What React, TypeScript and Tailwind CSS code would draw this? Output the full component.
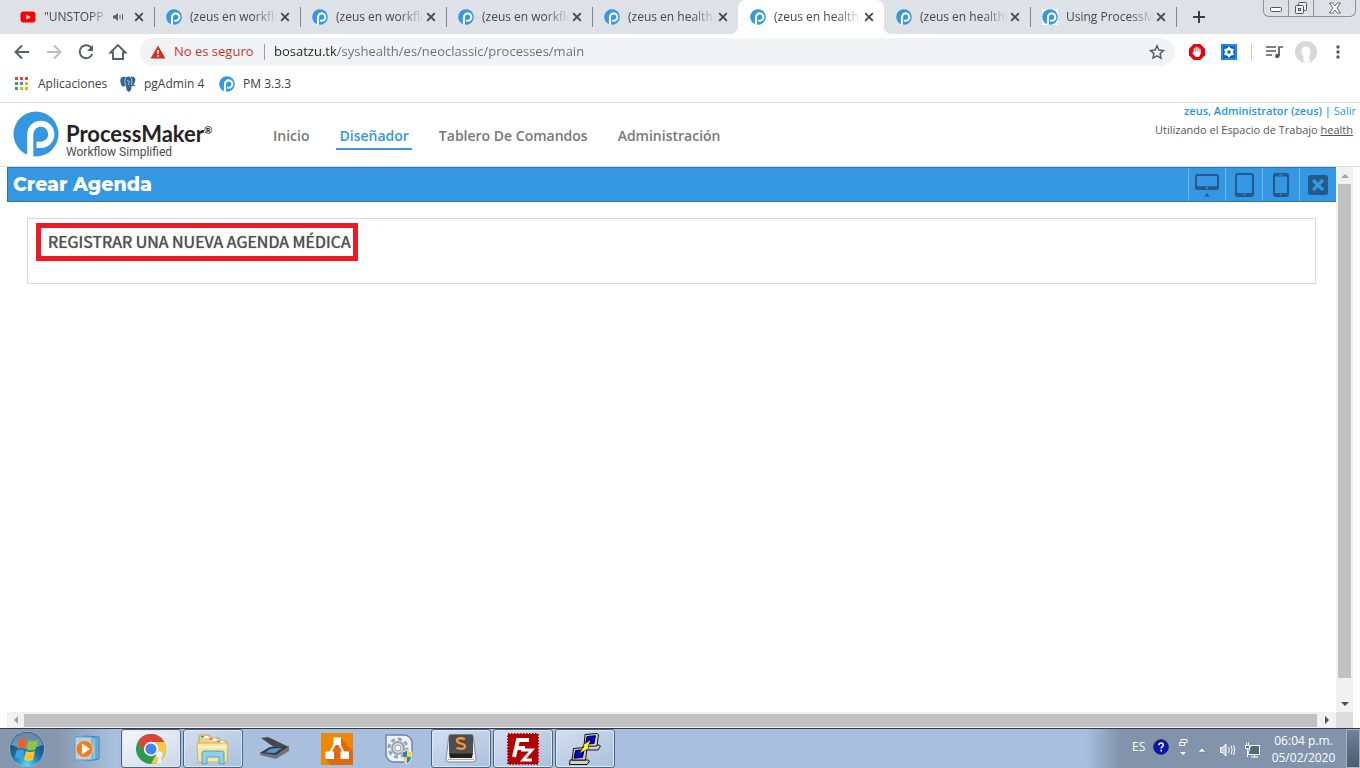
import React from "react";
import clsx from "clsx";

const TABS = [
  { title: "(zeus en workflo", active: false },
  { title: "(zeus en workflo", active: false },
  { title: "(zeus en workflo", active: false },
  { title: "(zeus en health)", active: false },
  { title: "(zeus en health)", active: true },
  { title: "(zeus en health)", active: false },
  { title: "Using ProcessM", active: false }
];

const NAV = ["Inicio", "Diseñador", "Tablero De Comandos", "Administración"];

function ProcessMakerMark({ className }: { className?: string }) {
  return (
    <svg viewBox="0 0 48 48" className={clsx("shrink-0", className)} aria-hidden="true">
      <circle cx="24" cy="24" r="23.5" fill="#3397e1" />
      <path d="M18 47V24a11 11 0 1 1 11 11.3H24.5" fill="none" stroke="#fff" strokeWidth="6.4" />
    </svg>
  );
}

function CloseGlyph() {
  return (
    <svg viewBox="0 0 10 10" className="size-[10px]" fill="none" stroke="#45494d" strokeWidth="1.9" aria-hidden="true">
      <path d="M1.2 1.2l7.6 7.6M8.8 1.2L1.2 8.8" />
    </svg>
  );
}

function YoutubeIcon() {
  return (
    <svg viewBox="0 0 16 12" className="h-3 w-4 shrink-0" aria-hidden="true">
      <rect x="0.5" y="0.5" width="15" height="11" rx="3" fill="#f00" />
      <path d="M6.4 3.6v4.8L10.6 6z" fill="#fff" />
    </svg>
  );
}

function TabStrip() {
  return (
    <div className="flex h-[34px] shrink-0 bg-[#dee1e6]">
      <div className="flex min-w-0 items-center pl-2">
        <div className="flex h-full w-[146px] items-center pr-[10px] pl-3">
          <YoutubeIcon />
          <span className="ml-2 w-[65px] whitespace-nowrap [mask-image:linear-gradient(to_right,#000_70%,transparent)]">
            "UNSTOPP
          </span>
          <svg viewBox="0 0 12 10" className="ml-[3px] h-[10px] w-3 shrink-0" aria-label="audio">
            <path d="M1 3.5h2L6 1v8L3 6.5H1z" fill="#5f6368" />
            <path d="M8 3v4M10.5 2v6" stroke="#5f6368" fill="none" />
          </svg>
          <button type="button" aria-label="Cerrar" className="ml-auto"><CloseGlyph /></button>
        </div>
        {TABS.map((tab, index) => (
          <div
            key={index}
            className={clsx(
              "relative flex h-full w-[146px] items-center pr-[10px] pl-3",
              tab.active && "rounded-t-lg bg-white"
            )}
          >
            {tab.active || TABS[index - 1]?.active ? null : (
              <span className="absolute top-[7px] left-0 h-5 w-px bg-[#83868b]" />
            )}
            {tab.active ? (
              <>
                <span className="absolute bottom-0 -left-2 size-2 bg-[radial-gradient(circle_at_0_0,#dee1e6_8px,#fff_8px)]" />
                <span className="absolute -right-2 bottom-0 size-2 bg-[radial-gradient(circle_at_100%_0,#dee1e6_8px,#fff_8px)]" />
              </>
            ) : null}
            <ProcessMakerMark className={clsx("size-4", index === 6 && "bg-white")} />
            <span className="ml-2 w-[88px] whitespace-nowrap [mask-image:linear-gradient(to_right,#000_72%,transparent)]">
              {tab.title}
            </span>
            <button type="button" aria-label="Cerrar" className="ml-auto"><CloseGlyph /></button>
          </div>
        ))}
        <span className="h-5 w-px bg-[#83868b]" />
        <button type="button" aria-label="Nueva pestaña" className="ml-4">
          <svg viewBox="0 0 12 12" className="size-3" stroke="#3c4043" strokeWidth="2" aria-hidden="true">
            <path d="M6 0v12M0 6h12" />
          </svg>
        </button>
      </div>

      <div className="mr-1 ml-auto flex h-[17px] divide-x divide-[#8f9297] rounded-b-md border border-t-0 border-[#8f9297]">
        <button type="button" aria-label="Minimizar" className="flex w-[25px] items-center justify-center">
          <svg viewBox="0 0 12 6" className="mt-1 h-[6px] w-3" fill="#fff" stroke="#53565a">
            <rect x="0.5" y="0.5" width="11" height="4" rx="1" />
          </svg>
        </button>
        <button type="button" aria-label="Restaurar" className="flex w-[25px] items-center justify-center">
          <svg viewBox="0 0 14 14" className="size-[14px]" fill="#eceef0" stroke="#53565a">
            <rect x="4.5" y="1.5" width="8" height="8" rx="1" />
            <rect x="1.5" y="4.5" width="8" height="8" rx="1" />
            <rect x="4.5" y="7.5" width="2" height="2" />
          </svg>
        </button>
        <button type="button" aria-label="Cerrar ventana" className="flex w-[41px] items-center justify-center">
          <svg viewBox="0 0 12 12" className="size-3" fill="#fff" stroke="#65686c">
            <path d="M.5 1h3L6 4l2.5-3h3L8 6l3.5 5h-3L6 8l-2.5 3h-3L4 6z" />
          </svg>
        </button>
      </div>
    </div>
  );
}

function Toolbar() {
  return (
    <div className="flex h-9 shrink-0 items-center bg-white pl-[10px]">
      <div className="flex items-center gap-2 text-[#5a5d61]">
        <button type="button" aria-label="Atrás">
          <svg viewBox="0 0 24 24" className="size-6" fill="none" stroke="currentColor" strokeWidth="2">
            <path d="M19 12H6M12 5.5L5.5 12l6.5 6.5" />
          </svg>
        </button>
        <button type="button" aria-label="Adelante" className="text-[#bcbec1]">
          <svg viewBox="0 0 24 24" className="size-6" fill="none" stroke="currentColor" strokeWidth="2">
            <path d="M5 12h13M12 5.5l6.5 6.5-6.5 6.5" />
          </svg>
        </button>
        <button type="button" aria-label="Recargar">
          <svg viewBox="0 0 24 24" className="size-6" fill="none" stroke="currentColor" strokeWidth="2">
            <path d="M17.6 8A6.5 6.5 0 1 0 18.3 14" />
            <path d="M19 5v6h-6z" fill="currentColor" stroke="none" />
          </svg>
        </button>
        <button type="button" aria-label="Inicio">
          <svg viewBox="0 0 24 24" className="size-6" fill="none" stroke="currentColor" strokeWidth="1.9">
            <path d="M4.5 12.5L12 5l7.5 7.5H17V19H7v-6.5z" />
          </svg>
        </button>
      </div>
      <div className="ml-[10px] flex h-7 min-w-0 flex-1 items-center rounded-full bg-[#f1f3f4] pr-2 pl-[10px] text-[13px]">
        <svg viewBox="0 0 16 14" className="h-[14px] w-4 shrink-0" aria-hidden="true">
          <path d="M8 .5L15.5 13.5H.5z" fill="#cb3225" />
          <path d="M8 5v4M8 10.2v1.6" stroke="#fff" strokeWidth="1.5" />
        </svg>
        <span className="ml-2 w-[83px] whitespace-nowrap text-[#c5372c]">No es seguro</span>
        <span className="mr-[9px] ml-[7px] h-4 w-px bg-[#9a9da1]" />
        <input
          type="text"
          aria-label="Dirección"
          defaultValue="bosatzu.tk/syshealth/es/neoclassic/processes/main"
          className="min-w-0 flex-1 bg-[linear-gradient(to_right,#202124_63px,#696d72_63px)] bg-clip-text text-transparent outline-none"
        />
        <button type="button" aria-label="Favorito">
          <svg viewBox="0 0 20 20" className="size-5" fill="none" stroke="#5a5d61" strokeWidth="1.5">
            <path d="M10 3.8l1.9 4.2 4.6.5-3.4 3.1.9 4.5-4-2.3-4 2.3.9-4.5-3.4-3.1 4.6-.5z" />
          </svg>
        </button>
      </div>
      <div className="flex items-center pr-3 pl-[14px]">
        <button type="button" aria-label="Bloqueador">
          <svg viewBox="0 0 16 16" className="size-4">
            <path d="M4.7 0h6.6L16 4.7v6.6L11.3 16H4.7L0 11.3V4.7z" fill="#e3070c" />
            <path d="M5.3 8V4.8M7.2 8V3.2M9.1 8V3.6M11 8.5V5.2" stroke="#fff" strokeWidth="1.3" strokeLinecap="round" />
            <path d="M4.7 7.5h6.9v2.4L10 13H6.8L3.2 9l1-.8z" fill="#fff" />
          </svg>
        </button>
        <button type="button" aria-label="Extensión" className="ml-4">
          <svg viewBox="0 0 16 16" className="size-4">
            <path d="M0 0h16v16H0z" fill="#1e88f0" />
            <path d="M2 2h12v12H2z" fill="#1264c4" />
            <circle cx="8" cy="8" r="3" fill="none" stroke="#fff" strokeWidth="2.4" />
            <path d="M8 2.7v1.5M8 11.8v1.5M3.4 5.3l1.3.8M11.3 9.9l1.3.8M3.4 10.7l1.3-.8M11.3 6.1l1.3-.8" stroke="#fff" strokeWidth="2" />
          </svg>
        </button>
        <span className="ml-[14px] h-4 w-px bg-[#c9cbce]" />
        <button type="button" aria-label="Lista" className="ml-[14px]">
          <svg viewBox="0 0 17 14" className="h-[14px] w-[17px]" fill="none" stroke="#54575b" strokeWidth="1.7">
            <path d="M0 2h10M0 6h10M0 10h6M13 11V2h4" />
            <circle cx="11.3" cy="11" r="2.2" fill="#54575b" stroke="none" />
          </svg>
        </button>
        <button type="button" aria-label="Perfil" className="ml-3">
          <svg viewBox="0 0 22 22" className="size-[22px]">
            <circle cx="11" cy="11" r="11" fill="#d8d8d8" />
            <path d="M11 5.5c-3 0-4.5 2-4.5 5 0 2 .8 3.5 2 4.500V20l2.5 2 4-1-1-6c1-1 1.500-2.500 1.500-4.500 0-3-1.500-5-4.500-5z" fill="#fff" />
          </svg>
        </button>
        <button type="button" aria-label="Menú" className="ml-[11px]">
          <svg viewBox="0 0 20 20" className="size-5" fill="#54575b">
            <circle cx="10" cy="5" r="1.7" />
            <circle cx="10" cy="10" r="1.7" />
            <circle cx="10" cy="15" r="1.7" />
          </svg>
        </button>
      </div>
    </div>
  );
}

function PgAdminIcon() {
  return (
    <svg viewBox="0 0 16 16" className="size-4" aria-hidden="true">
      <path d="M3 .8C.5 1.5 0 3.5.4 5.5c.5 3 1.5 5.500 3 5.200 1-.2 1.600-1 2.200-1.200l.6.4c-.2 2.500.3 5.100 2.300 5.800 1.700.4 2.500-1 2.700-2.900l.4-2.700c1.600.4 3-.1 4-.9-1-.1-1.700-.1-1.900-.6 1.500-2.500 2.300-5.600 1-7-1.300-1-3-1.100-4.700-.8C8.500.3 7 .5 6 1.200 5 .8 4 .6 3 .8z" fill="#336791" />
      <path d="M6 1.500C4.700 3 4.800 5 5 7.500L5.800 9M10 1c2 1.500 2 4 1.700 6v2.200M7 4.800c1-.6 2-.2 2 1.200L8.600 9" fill="none" stroke="#fff" strokeWidth=".6" />
    </svg>
  );
}

const APP_DOTS = ["#ea4335", "#ea4335", "#ea4335", "#34a853", "#4285f4", "#f9ab00", "#34a853", "#f9ab00", "#f9ab00"];

function BookmarksBar() {
  return (
    <div className="flex h-8 shrink-0 items-start bg-white pt-1 pl-[14px] text-[12px] text-[#3c4043]">
      <a href="#apps" className="flex h-5 w-[106px] items-center gap-[10px]">
        <svg viewBox="0 0 14 14" className="size-[14px]" aria-hidden="true">
          {APP_DOTS.map((fill, i) => (
            <rect key={i} x={(i % 3) * 5 + 1} y={Math.floor(i / 3) * 5} width="3" height="3" fill={fill} />
          ))}
        </svg>
        Aplicaciones
      </a>
      <a href="#pgadmin" className="flex h-5 w-[99px] items-center gap-2">
        <PgAdminIcon />
        pgAdmin 4
      </a>
      <a href="#pm" className="flex h-5 items-center gap-2">
        <ProcessMakerMark className="size-4" />
        PM 3.3.3
      </a>
    </div>
  );
}

function AppHeader() {
  return (
    <header className="flex h-[65px] shrink-0 border-y border-[#dfdfdf] bg-white">
      <div className="flex w-[260px] shrink-0 items-start pt-2 pl-[13px]">
        <ProcessMakerMark className="size-[46px]" />
        <div className="pt-[13px] pl-[7px] whitespace-nowrap">
          <div className="flex h-5 items-start font-['Lato',sans-serif] text-[22px] leading-5 font-bold text-[#262324]">
            ProcessMaker
            <span className="text-[10px] leading-3">®</span>
          </div>
          <div className="font-['Roboto',sans-serif] text-[12px] leading-4 text-[#4b4b4b]">Workflow Simplified</div>
        </div>
      </div>
      <nav className="flex items-start gap-6 pt-[21px] pl-[10px] text-[14px] leading-6 font-semibold text-[#777]">
        {NAV.map((item) => (
          <a
            key={item}
            href={`#${item}`}
            className={clsx(
              "border-b-2 px-[3px] whitespace-nowrap",
              item === "Diseñador" ? "border-[#3397e1] text-[#3397e1]" : "border-transparent"
            )}
          >
            {item}
          </a>
        ))}
      </nav>
      <div className="ml-auto pr-1 text-right text-[11px] whitespace-nowrap text-[#555]">
        <div className="h-4 leading-4 text-[#1e96e0]">
          <span className="font-semibold">zeus, Administrator (zeus) | </span>
          <a href="#salir">Salir</a>
        </div>
        <div className="pt-[3px] pr-[3px] leading-4">
          Utilizando el Espacio de Trabajo <a href="#health" className="underline">health</a>
        </div>
      </div>
    </header>
  );
}

function MonitorIcon() {
  return (
    <svg viewBox="0 0 24 24" className="size-6" fill="none" stroke="#245a88" strokeWidth="2">
      <rect x="1" y="2" width="22" height="14" rx="1.5" />
      <path d="M1 15h22" strokeWidth="3.5" />
      <path d="M8 23.5q3-.5 3-3h2q0 2.500 3 3z" fill="#245a88" stroke="none" />
      <path d="M11 15h2" stroke="#3397e1" strokeWidth="1.5" />
    </svg>
  );
}

function TabletIcon() {
  return (
    <svg viewBox="0 0 24 24" className="size-6" fill="none" stroke="#245a88" strokeWidth="2">
      <rect x="4" y="1" width="17" height="22" rx="2" />
      <path d="M4 21.500h17" strokeWidth="3" />
      <path d="M11.5 21.500h2" stroke="#3397e1" strokeWidth="1.5" />
    </svg>
  );
}

function PhoneIcon() {
  return (
    <svg viewBox="0 0 24 24" className="size-6" fill="none" stroke="#245a88" strokeWidth="2">
      <rect x="5" y="1" width="14" height="22" rx="2" />
      <path d="M5 2h14M5 21.500h14" strokeWidth="3" />
      <path d="M10 2h4M11 21.500h2" stroke="#3397e1" strokeWidth="1.2" />
    </svg>
  );
}

function CloseIcon() {
  return (
    <svg viewBox="0 0 24 24" className="size-6" fill="none">
      <rect x="2" y="2" width="20" height="20" rx="2.5" fill="#245a88" />
      <path d="M7 7l10 10M17 7L7 17" stroke="#3397e1" strokeWidth="3.2" />
    </svg>
  );
}

const VIEW_BUTTONS = [
  { label: "Escritorio", icon: <MonitorIcon /> },
  { label: "Tableta", icon: <TabletIcon /> },
  { label: "Móvil", icon: <PhoneIcon /> },
  { label: "Cerrar vista", icon: <CloseIcon /> }
];

function Arrow({ d, fill }: { d: string; fill: string }) {
  return (
    <svg viewBox="0 0 8 8" className="size-2" fill={fill} aria-hidden="true">
      <path d={d} />
    </svg>
  );
}

function Preview() {
  return (
    <main className="flex min-h-0 flex-1 flex-col bg-white px-[7px]">
      <div className="flex min-h-0 flex-1">
        <div className="min-w-0 flex-1">
          <div className="flex h-[35px] items-stretch border-y border-l border-[#2877b5] bg-[#3397e1]">
            <h1 className="flex-1 pl-[5px] font-['Montserrat','Inter',sans-serif] text-[19px] leading-[34px] font-extrabold text-white">
              Crear Agenda
            </h1>
            {VIEW_BUTTONS.map(({ label, icon }) => (
              <button
                key={label}
                type="button"
                aria-label={label}
                className="flex w-[37px] items-center justify-center border-l border-[#6cb6ee]"
              >
                {icon}
              </button>
            ))}
          </div>
          <section className="mx-5 mt-4 flex h-[66px] items-start border border-[#d9d9d9] pt-1 pl-2">
            <h2 className="h-[38px] w-[322px] border-[5px] border-[#ed1c24] pl-[7px] font-['Noto_Sans_CJK_SC',sans-serif] text-[16px] leading-[27px] font-normal whitespace-nowrap text-[#505050] [text-shadow:0_0_1px_#505050]">
              REGISTRAR UNA NUEVA AGENDA MÉDICA
            </h2>
          </section>
        </div>
        <div className="flex w-[17px] shrink-0 flex-col items-center bg-[#f1f1f1]">
          <span className="flex h-[17px] items-center"><Arrow d="M0 6l4-4 4 4z" fill="#a3a3a3" /></span>
          <span className="w-[13px] flex-1 bg-[#c1c1c1]" />
          <span className="flex h-[34px] items-end pb-1"><Arrow d="M0 2l4 4 4-4z" fill="#505050" /></span>
        </div>
      </div>
      <div className="flex h-4 shrink-0 items-center bg-[#f1f1f1]">
        <span className="flex w-[17px] justify-center"><Arrow d="M6 0L2 4l4 4z" fill="#a3a3a3" /></span>
        <span className="h-[13px] flex-1 bg-[#c1c1c1]" />
        <span className="flex w-[19px] justify-center"><Arrow d="M2 0l4 4-4 4z" fill="#505050" /></span>
        <span className="h-full w-[17px] bg-[#dcdcdc]" />
      </div>
    </main>
  );
}

function StartOrb() {
  return (
    <svg viewBox="0 0 38 38" className="size-[38px]" aria-hidden="true">
      <defs>
        <radialGradient id="orb" cx="50%" cy="95%" r="85%">
          <stop offset="0" stopColor="#4fe0ff" />
          <stop offset=".45" stopColor="#1d78ad" />
          <stop offset="1" stopColor="#16406b" />
        </radialGradient>
      </defs>
      <circle cx="19" cy="19" r="17.5" fill="url(#orb)" stroke="#8fb2cf" />
      <path d="M3 15a16.5 16.5 0 0 1 32 0q-16 7-32 0z" fill="#cfe2f0" opacity=".45" />
      <path d="M11.500 9.500q4-2.500 7.500 0l-2 9.500q-4-2-8 0z" fill="#f0602a" />
      <path d="M20.500 10.500q4 2 9.500-.5l-2.500 9.500q-4 2-9 0z" fill="#8cc63e" />
      <path d="M8.500 20.500q4-2 8 0l-2 8.500q-4-2-8 0z" fill="#35a3e6" />
      <path d="M18 21q4 2 9 0l-2 9q-4 2-9 0z" fill="#ffc52b" />
    </svg>
  );
}

function MediaPlayerIcon() {
  return (
    <svg viewBox="0 0 32 32" className="size-8" aria-hidden="true">
      <path d="M12 3l14 1v22l-11 2z" fill="#6eb2dc" stroke="#3884b4" />
      <path d="M9 4l14 1v21l-10 2z" fill="#8ac5e8" stroke="#4b94c2" />
      <path d="M2 4h17v23H2z" fill="#a9d5ee" stroke="#5aa1cb" />
      <circle cx="11.5" cy="16" r="8.5" fill="#f47c20" stroke="#fbc398" />
      <path d="M9 10.5l8 5.500-8 5.500z" fill="#fff" />
    </svg>
  );
}

function ChromeIcon() {
  return (
    <svg viewBox="0 0 32 32" className="size-8" aria-hidden="true">
      <circle cx="16" cy="16" r="15" fill="#2c9b50" />
      <path d="M16 16L3 8.500A15 15 0 0 1 29 8.500z" fill="#df4237" />
      <path d="M16 9h13.300A15 15 0 0 1 16 31l6-11.500z" fill="#fdc93a" />
      <path d="M3 8.500l7 11L16 9z" fill="#df4237" />
      <circle cx="16" cy="16" r="7.2" fill="#fff" />
      <circle cx="16" cy="16" r="5.6" fill="#4285f4" />
      <path d="M24 18c-2 0-3 1.500-3 3.500s1 2.500 1.500 3V28l-1 3h6l-1-3v-3.500c1-.5 1.500-1.500 1.500-3 0-2-1-3.500-4-3.500z" fill="#f3f3f3" stroke="#c4c4c4" strokeWidth=".6" />
    </svg>
  );
}

function ExplorerIcon() {
  return (
    <svg viewBox="0 0 34 32" className="h-8 w-[34px]" aria-hidden="true">
      <path d="M3 3q0-1 1-1h9l2 3h8l2 3h6v20H3z" fill="#eed382" stroke="#c5a247" />
      <path d="M5 3h7l1 2H5zM13 5.500h7l1 2h-7zM21 8h7l1 2h-7z" fill="#fff" />
      <path d="M5 3h3v1.500H5z" fill="#18b32d" />
      <path d="M13.500 5.500h3V7h-3z" fill="#e0432d" />
      <path d="M21 8h3v1.500h-3z" fill="#3498e8" />
      <path d="M1 10h31l-1 19H2z" fill="#f8e7a4" stroke="#d2b25b" />
      <path d="M2 13h29v2H2z" fill="#fdf4cc" />
      <path d="M6 31V20q0-2 2-2h18q2 0 2 2v11h-5v-7H11v7z" fill="#91cfe6" stroke="#579fbf" />
    </svg>
  );
}

function ScannerIcon() {
  return (
    <svg viewBox="0 0 32 32" className="size-8" aria-hidden="true">
      <path d="M2 5l7-1 21 10-8 5z" fill="#46494c" />
      <path d="M1 20l10-6 19-1v5l-13 8L1 22z" fill="#707478" />
      <path d="M1 20l10-6 19-1-13 9z" fill="#383b3e" />
      <path d="M6 19.500l6-4 11-.5-7 5z" fill="#4a9bd0" />
    </svg>
  );
}

function DrawIoIcon() {
  return (
    <svg viewBox="0 0 32 32" className="size-8" aria-hidden="true">
      <path d="M0 0h32v32H0z" fill="#f08705" />
      <path d="M20 5l12 13v14H9l-4-6 8-12z" fill="#df6c0c" />
      <path d="M14.500 10L9 20M17.500 10L23 20" stroke="#fff" strokeWidth="2" />
      <path d="M12.500 4.500h7.500v7.500h-7.500zM4.500 18.500H13V26H4.500zM19.500 18.500H28V26h-8.500z" fill="#fff" />
    </svg>
  );
}

function SettingsAppIcon() {
  return (
    <svg viewBox="0 0 32 32" className="size-8" aria-hidden="true">
      <path d="M3 2h18a8 8 0 0 1 8 8v11a8 8 0 0 1-8 8H11a8 8 0 0 1-8-8z" fill="#edf1f8" stroke="#6f83a8" strokeWidth="1.5" />
      <circle cx="15" cy="15" r="9" fill="none" stroke="#98a1ac" strokeWidth="3" strokeDasharray="4 3" />
      <circle cx="15" cy="15" r="6" fill="#d9dde2" stroke="#98a1ac" strokeWidth="2" />
      <circle cx="15" cy="15" r="3" fill="#fff" stroke="#98a1ac" />
      <path d="M19 19q3 0 5-2 2 2 5 2 0 9-5 12-5-3-5-12z" fill="#ffd42a" stroke="#e8ecf2" />
      <path d="M24 17.500q-2 1.700-4.500 1.900V24H24zM24 24h4.200q-1 4.500-4.200 6.500z" fill="#2581d8" />
    </svg>
  );
}

function SublimeIcon() {
  return (
    <svg viewBox="0 0 32 32" className="size-8" aria-hidden="true">
      <path d="M4 2h24l3 24q0 3-3 3H4q-3 0-3-3z" fill="#f6f6f6" stroke="#888" />
      <path d="M4 20h24l-1 5H5z" fill="#222" />
      <rect x="4" y="1.5" width="24" height="19" rx="2" fill="#4e4e4e" />
      <path d="M20 6q-8-2-8 1.500 0 2 4 3 4.500 1 4 3.500-1 3-8.500 1" fill="none" stroke="#f8953c" strokeWidth="2.3" />
      <path d="M3 26.500h26" stroke="#aaa" />
    </svg>
  );
}

function FileZillaIcon() {
  return (
    <svg viewBox="0 0 32 32" className="size-8" aria-hidden="true">
      <path d="M1 1h30v30H1z" fill="#b30000" stroke="#b30000" strokeWidth="2" strokeDasharray="1.5 1.5" />
      <path d="M7 24L11 7h11M9 15h9" fill="none" stroke="#fff" strokeWidth="4" />
      <path d="M14 17h11l-9 10h9" fill="none" stroke="#fff" strokeWidth="2.8" />
    </svg>
  );
}

function PuttyIcon() {
  return (
    <svg viewBox="0 0 32 32" className="size-8" aria-hidden="true">
      <g stroke="#000" strokeWidth=".9">
        <path d="M14 13l16-1 1.500 1-2.500 4H13z" fill="#d4d0c8" />
        <path d="M16 1.500L28 .5l1.500 1L28 13l-13 .5z" fill="#d4d0c8" />
        <path d="M18 3.500l8.500-.8L25 10.500l-8.500.7z" fill="#0000d8" />
        <path d="M1 27h18l1.500 1-2.500 3.500H.5z" fill="#d4d0c8" />
        <path d="M4.500 15.500l12-1 1.500 1L16.500 27H3z" fill="#d4d0c8" />
        <path d="M6.500 17.500l8.500-.8-1.500 7.800-8.500.7z" fill="#0000d8" />
        <path d="M22 6.500l-8 5.500 1 1.500-5 7 10-5-1-2.500z" fill="#ffff20" strokeWidth=".5" />
      </g>
    </svg>
  );
}

const TASKS = [
  { name: "Reproductor", open: false, icon: <MediaPlayerIcon /> },
  { name: "Chrome", open: true, icon: <ChromeIcon /> },
  { name: "Explorador", open: true, icon: <ExplorerIcon /> },
  { name: "Escáner", open: false, icon: <ScannerIcon /> },
  { name: "Diagramas", open: false, icon: <DrawIoIcon /> },
  { name: "Servicios", open: false, icon: <SettingsAppIcon /> },
  { name: "Sublime Text", open: true, icon: <SublimeIcon /> },
  { name: "FileZilla", open: true, icon: <FileZillaIcon /> },
  { name: "PuTTY", open: true, icon: <PuttyIcon /> }
];

function Taskbar() {
  return (
    <footer className="flex h-10 shrink-0 items-stretch border-t border-[#2d3b4f] bg-[linear-gradient(to_right,#8596ad_0,#8596ad_55px,#a8c0de_115px,#a8c0de_calc(100%-275px),#8194ac_calc(100%-240px))]">
      <button type="button" aria-label="Inicio de Windows" className="flex w-[59px] items-center pl-2"><StartOrb /></button>
      <div className="flex gap-[2px]">
        {TASKS.map(({ name, open, icon }) => (
          <button
            key={name}
            type="button"
            aria-label={name}
            className={clsx(
              "flex w-[60px] items-center justify-center",
              open && "rounded-[3px] border border-[#4f6380] bg-linear-to-br shadow-[inset_0_0_0_1px_#dce8f5]",
              open && (name === "Chrome" ? "from-[#f6f8fb] to-[#cbd7e6]" : "from-[#d3e0ef] to-[#a9c0dc]")
            )}
          >
            {icon}
          </button>
        ))}
      </div>
      <div className="ml-auto flex items-center text-[12px] text-white">
        <span className="w-[21px] pb-1">ES</span>
        <svg viewBox="0 0 16 16" className="mb-1 size-4" aria-label="Ayuda">
          <circle cx="8" cy="8" r="7.3" fill="#0b12c0" stroke="#20242e" />
          <path d="M5.8 6.2c0-3 4.800-2.700 4.500 0C10 7.700 8.200 7.700 8.200 9.500M8.200 10.800v1.700" fill="none" stroke="#fff" strokeWidth="1.6" />
        </svg>
        <svg viewBox="0 0 10 18" className="mb-1 ml-[9px] h-[18px] w-[10px]" fill="none" stroke="#fff" aria-hidden="true">
          <path d="M3 3.500V1.500h6v3H7M1.500 4.500h5v3h-5z" />
          <path d="M2 14h6l-3 3z" fill="#fff" stroke="none" />
        </svg>
        <svg viewBox="0 0 10 6" className="mt-[3px] ml-[9px] h-[6px] w-[10px]" aria-hidden="true">
          <path d="M1 5l4-4 4 4z" fill="#fff" stroke="#556579" strokeWidth=".5" />
        </svg>
        <svg viewBox="0 0 17 16" className="mt-[3px] ml-3 h-4 w-[17px]" fill="none" stroke="#fff" aria-hidden="true">
          <path d="M1.500 5.500h2L7 2v12l-3.500-3.500h-2z" fill="#c3ccd8" />
          <path d="M9.500 5q1.500 3 0 6M12 3.500q2.300 4.500 0 9M14.500 3q2.500 5 0 10" />
        </svg>
        <svg viewBox="0 0 17 16" className="mt-[3px] ml-2 h-4 w-[17px]" fill="none" stroke="#fff" aria-hidden="true">
          <path d="M6.500 3.500h9v9h-11v-2z" fill="#58687c" />
          <path d="M7 15h7M10.500 12.500V15" />
          <path d="M1.500 3.500h4v3h-4zM2.500 3V.5M4.500 3V.5M3.500 7v8" fill="#58687c" />
        </svg>
        <div className="flex w-[85px] flex-col items-center leading-[17px]">
          <time>06:04 p.m.</time>
          <time>05/02/2020</time>
        </div>
        <button
          type="button"
          aria-label="Mostrar escritorio"
          className="h-full w-[14px] border border-[#a7b3c1] bg-linear-to-b from-[#718197] to-[#4d5c70]"
        />
      </div>
    </footer>
  );
}

export default function App() {
  return (
    <div className="flex h-screen w-full flex-col overflow-hidden bg-white font-['Open_Sans','Noto_Sans',sans-serif] text-[12px] text-[#45494d]">
      <TabStrip />
      <Toolbar />
      <BookmarksBar />
      <AppHeader />
      <Preview />
      <Taskbar />
    </div>
  );
}
